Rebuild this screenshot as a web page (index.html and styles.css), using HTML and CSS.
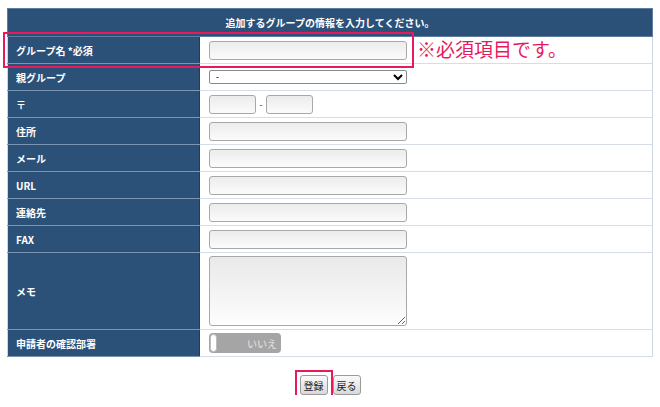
FILE: index.html
```html
<!DOCTYPE html>
<html lang="ja">
<head>
<meta charset="utf-8">
<link rel="stylesheet" href="styles.css">
</head>
<body>
<div class="page">
  <table class="form">
    <tr><th colspan="2" class="head">追加するグループの情報を入力してください。</th></tr>
    <tr><td class="lbl">グループ名 *必須</td><td class="val"><input class="txt" type="text"></td></tr>
    <tr><td class="lbl">親グループ</td><td class="val"><select class="sel"><option>-</option></select></td></tr>
    <tr><td class="lbl">〒</td><td class="val"><div class="zip"><input class="txt short" type="text"><span class="dash">-</span><input class="txt short" type="text"></div></td></tr>
    <tr><td class="lbl">住所</td><td class="val"><input class="txt" type="text"></td></tr>
    <tr><td class="lbl">メール</td><td class="val"><input class="txt" type="text"></td></tr>
    <tr><td class="lbl">URL</td><td class="val"><input class="txt" type="text"></td></tr>
    <tr><td class="lbl">連絡先</td><td class="val"><input class="txt" type="text"></td></tr>
    <tr><td class="lbl">FAX</td><td class="val"><input class="txt" type="text"></td></tr>
    <tr class="memo"><td class="lbl">メモ</td><td class="val"><textarea class="area"></textarea></td></tr>
    <tr><td class="lbl">申請者の確認部署</td><td class="val"><div class="toggle"><span class="knob"></span><span class="tlabel">いいえ</span></div></td></tr>
  </table>
  <div class="actions">
    <span class="hl-btn"><button class="btn">登録</button></span><button class="btn">戻る</button>
  </div>
  <div class="hl-row"></div>
  <div class="note">※必須項目です。</div>
</div>
</body>
</html>
```
FILE: styles.css
```css
html, body { margin: 0; padding: 0; background: #fff; }
body { font-family: "Noto Sans CJK JP", "DejaVu Sans", sans-serif; }
.page { position: relative; padding: 8px 0 0 7px; width: 646px; }
.form { width: 646px; border-collapse: collapse; border-spacing: 0; border: 1px solid #cdd6e2; border-top: none; }
.form td, .form th { padding: 0; }
.head { height: 27px; background: #2c5179; color: #fff; font-size: 10px; font-weight: bold; text-align: center; border: 1px solid #5d7c9f; }
.lbl { width: 183px; height: 26px; padding-left: 8px !important; background: #2c5179; color: #fff; font-size: 10px; font-weight: bold; border-bottom: 1px solid #7b95b2; border-right: 1px solid #1d3d60; }
.val { padding-left: 9px !important; border-bottom: 1px solid #d6dde8; background: #fff; vertical-align: middle; }
.memo .lbl { height: 76px; }
.txt { display: block; box-sizing: border-box; width: 198px; height: 19px; border: 1px solid #a8a8a8; border-radius: 3px; background: linear-gradient(#ececec, #fbfbfb); margin: 0; padding: 0; }
.sel { display: block; box-sizing: border-box; width: 198px; height: 14px; font-size: 9px; border: 1px solid #8a8a8a; border-radius: 2px; background: #fff; margin: 0; padding: 0 0 0 2px; }
.zip { display: flex; align-items: center; }
.txt.short { width: 47px; }
.dash { width: 10px; text-align: center; font-size: 9px; color: #333; }
.area { display: block; box-sizing: border-box; width: 198px; height: 70px; border: 1px solid #a8a8a8; border-radius: 3px; background: linear-gradient(#e9e9e9, #fdfdfd); margin: 0; resize: vertical; }
.toggle { display: flex; align-items: center; justify-content: space-between; box-sizing: border-box; width: 72px; height: 20px; background: #a5a5a5; border-radius: 4px; padding-right: 4px; }
.knob { width: 7px; height: 18px; background: #fff; border: 1px solid #bdbdbd; border-radius: 4px; box-sizing: border-box; margin-left: 1px; }
.tlabel { color: #e6e6e6; font-size: 10px; }
.actions { display: flex; justify-content: center; align-items: center; gap: 5px; padding-top: 18px; }
.hl-btn { outline: 2px solid #e8195c; outline-offset: 3px; display: flex; }
.btn { box-sizing: border-box; height: 20px; padding: 0 3px; font-family: "Noto Sans CJK JP", sans-serif; font-size: 10px; color: #222; border: 1px solid #9a9a9a; border-radius: 3px; background: linear-gradient(#fafafa, #d9d9d9); }
.hl-row { position: absolute; left: 3px; top: 32px; width: 407px; height: 32px; border: 2px solid #e8195c; }
.note { position: absolute; left: 417px; top: 36px; color: #e8195c; font-size: 19px; line-height: 26px; white-space: nowrap; }
```
